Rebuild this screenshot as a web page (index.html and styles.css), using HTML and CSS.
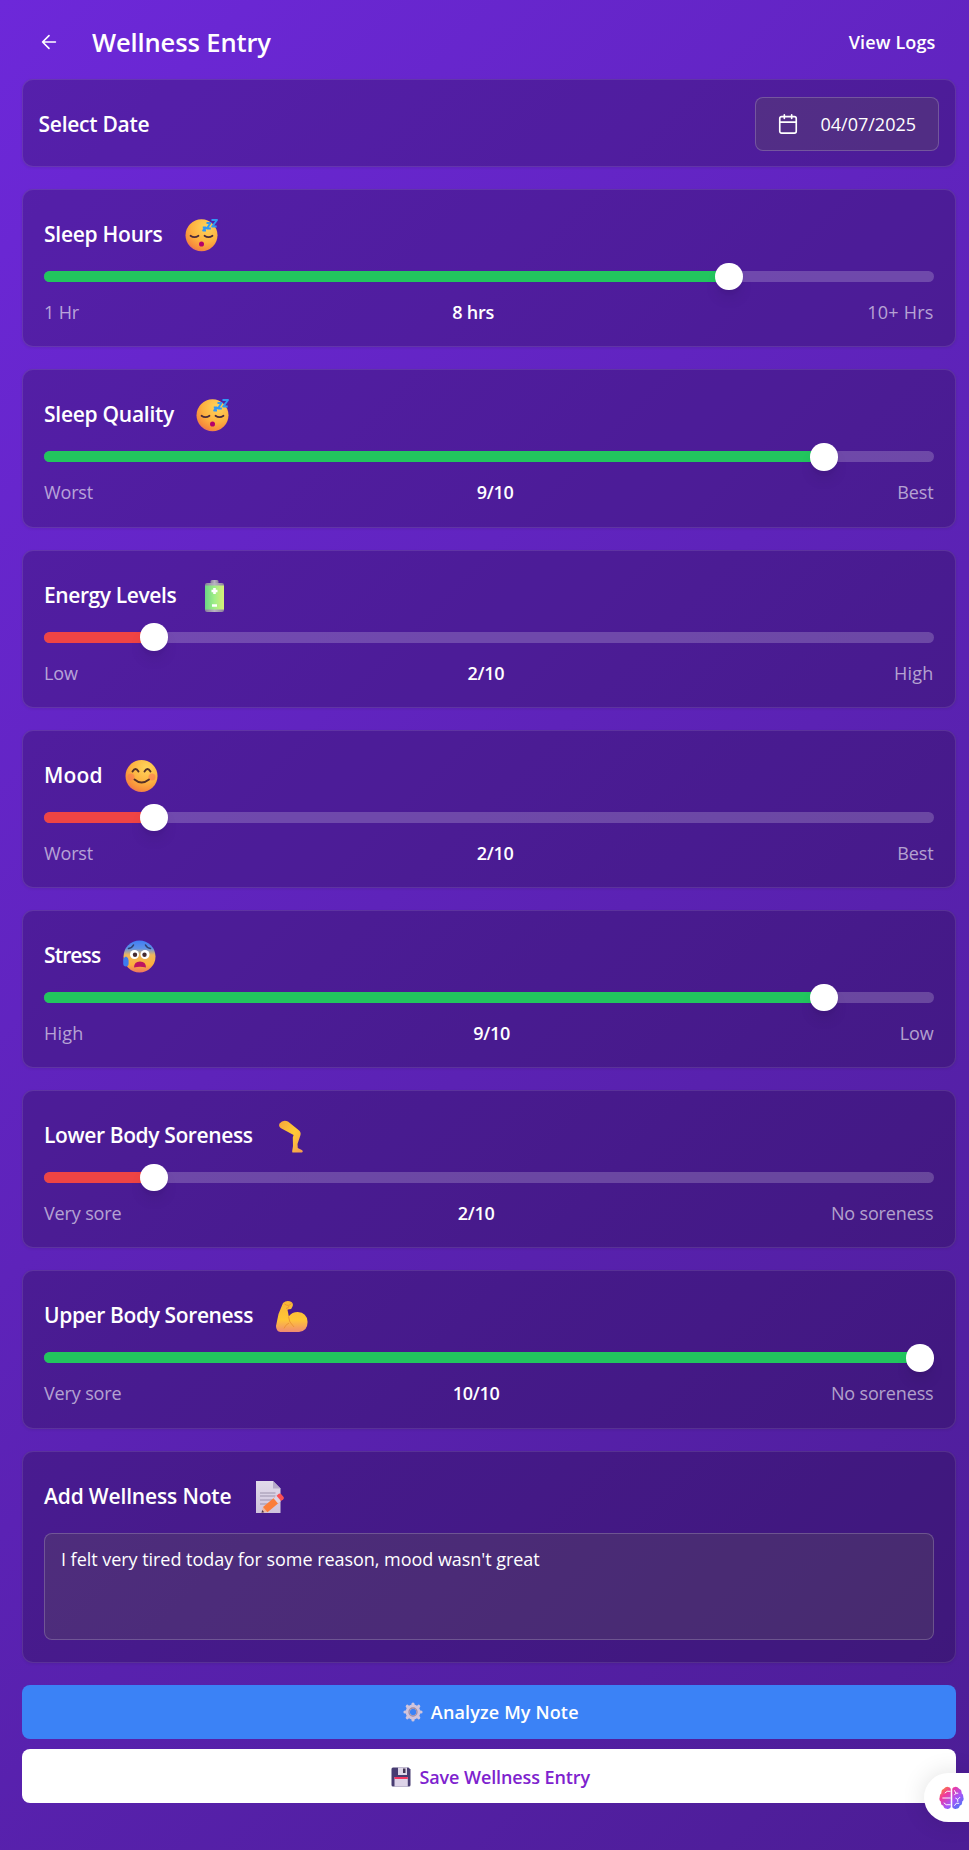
FILE: index.html
```html
<!DOCTYPE html>
<html lang="en">
<head>
<meta charset="utf-8">
<title>Wellness Entry</title>
<link rel="stylesheet" href="styles.css">
</head>
<body>
<svg class="defs" width="0" height="0" aria-hidden="true">
  <defs>
    <radialGradient id="face" cx=".65" cy=".25" r=".85"><stop offset="0" stop-color="#ffd45a"/><stop offset=".55" stop-color="#fdb140"/><stop offset=".85" stop-color="#f68a3c"/><stop offset="1" stop-color="#e0607a"/></radialGradient>
    <linearGradient id="cold" x1="0" y1="0" x2="0" y2="1"><stop offset="0" stop-color="#3f7df5"/><stop offset=".25" stop-color="#5f92e6"/><stop offset=".45" stop-color="#efb65c"/><stop offset=".75" stop-color="#fdb03c"/><stop offset="1" stop-color="#ee7460"/></linearGradient>
    <linearGradient id="skin" x1="0" y1="0" x2="1" y2="1"><stop offset="0" stop-color="#f7a43c"/><stop offset=".5" stop-color="#ffcb35"/><stop offset="1" stop-color="#f59a50"/></linearGradient>
    <linearGradient id="arm" x1="0" y1="0" x2="0" y2="1"><stop offset="0" stop-color="#f9b638"/><stop offset=".6" stop-color="#ffc636"/><stop offset="1" stop-color="#f08b72"/></linearGradient>
    <linearGradient id="cell"><stop offset="0" stop-color="#6cd486"/><stop offset=".5" stop-color="#a0ee86"/><stop offset="1" stop-color="#d8ee78"/></linearGradient>
    <linearGradient id="cap"><stop offset="0" stop-color="#88809a"/><stop offset=".5" stop-color="#b9b3c2"/><stop offset="1" stop-color="#8d8499"/></linearGradient>
    <linearGradient id="paper" x1="0" y1="0" x2="0" y2="1"><stop offset="0" stop-color="#e2dbea"/><stop offset="1" stop-color="#cfc4dc"/></linearGradient>
    <linearGradient id="brain" x1="0" y1="0" x2="1" y2="1"><stop offset="0" stop-color="#ff9e1b"/><stop offset=".3" stop-color="#f0389b"/><stop offset=".6" stop-color="#a855f7"/><stop offset="1" stop-color="#2f7cf6"/></linearGradient>
    <symbol id="sleepy" viewBox="0 0 34 34">
      <circle cx="16.500" cy="17.300" r="16" fill="url(#face)"/>
      <path d="M5.500 17.700q4 3 8 0M19.500 17.700q4 3 8 0" fill="none" stroke="#4a2b3a" stroke-width="1.700" stroke-linecap="round"/>
      <ellipse cx="16.500" cy="26" rx="2.500" ry="2.600" fill="#b5006b"/>
      <path d="M26.500 2h5.500l-4.800 6.500h4.500M21.500 5h4l-3.500 5.500h3.800M17.800 9.500h3l-2.600 3h2.800" fill="none" stroke="#3097f5" stroke-width="2" stroke-linejoin="round"/>
    </symbol>
  </defs>
</svg>
<main class="page">
  <header class="header">
    <div class="heading">
      <svg class="back" viewBox="0 0 24 24"><path d="M12 19l-7-7 7-7M19 12H5"/></svg>
      <h1>Wellness Entry</h1>
    </div>
    <a class="logs">View Logs</a>
  </header>

  <section class="card date-card">
    <h2 class="title">Select Date</h2>
    <div class="date">
      <svg class="calendar" viewBox="0 0 24 24"><rect x="3" y="4" width="18" height="18" rx="2"/><path d="M16 2v4M8 2v4M3 10h18"/></svg>
      <span>04/07/2025</span>
    </div>
  </section>

  <section class="card metric">
    <div class="title-row"><h2 class="title">Sleep Hours</h2><svg class="emoji"><use href="#sleepy"/></svg></div>
    <div class="track"><div class="fill good" style="width:684.9px"></div></div>
    <div class="labels"><span>1 Hr</span><b>8 hrs</b><span class="loose">10+ Hrs</span></div>
  </section>

  <section class="card metric">
    <div class="title-row"><h2 class="title">Sleep Quality</h2><svg class="emoji"><use href="#sleepy"/></svg></div>
    <div class="track"><div class="fill good" style="width:780px"></div></div>
    <div class="labels"><span>Worst</span><b>9/10</b><span>Best</span></div>
  </section>

  <section class="card metric">
    <div class="title-row"><h2 class="title tight">Energy Levels</h2>
      <svg class="emoji" viewBox="0 0 34 34"><rect x="12.500" y="1" width="8" height="6" rx="1.500" fill="url(#cap)"/><rect x="7" y="4" width="19" height="29" rx="2" fill="url(#cap)"/><rect x="7" y="6.500" width="19" height="24" fill="url(#cell)"/><path d="M16.500 9v6M13.500 12h6M14 26.500h5" stroke="#fff" stroke-width="2.600"/></svg></div>
    <div class="track"><div class="fill bad" style="width:110px"></div></div>
    <div class="labels"><span>Low</span><b>2/10</b><span class="loose">High</span></div>
  </section>

  <section class="card metric">
    <div class="title-row"><h2 class="title wide">Mood</h2>
      <svg class="emoji" viewBox="0 0 34 34"><circle cx="16.500" cy="17" r="16" fill="url(#face)"/><circle cx="6" cy="18" r="3.500" fill="#fa7353" opacity=".55"/><circle cx="27" cy="18" r="3.500" fill="#fa7353" opacity=".55"/><path d="M7.500 12.500q3-5 6 0M19.500 12.500q3-5 6 0M9.500 20.500q7 6 14.500 0" fill="none" stroke="#543027" stroke-width="1.900" stroke-linecap="round"/></svg></div>
    <div class="track"><div class="fill bad" style="width:110px"></div></div>
    <div class="labels"><span>Worst</span><b>2/10</b><span>Best</span></div>
  </section>

  <section class="card metric">
    <div class="title-row"><h2 class="title narrow">Stress</h2>
      <svg class="emoji" viewBox="0 0 34 34"><circle cx="17.500" cy="17.500" r="16" fill="url(#cold)"/><path d="M6.500 9.500q3.500-.5 5-3.500M23.500 6q1.500 3 5 3.500" fill="none" stroke="#314070" stroke-width="1.600" stroke-linecap="round"/><circle cx="12.500" cy="15.500" r="4.500" fill="#fff"/><circle cx="23" cy="15.500" r="4.500" fill="#fff"/><circle cx="13" cy="15.700" r="2.200" fill="#452b32"/><circle cx="22.500" cy="15.700" r="2.200" fill="#452b32"/><path d="M12 28.500q0-6 6-6t6 6q-6-1.500-12 0" fill="#bd1461"/><path d="M4 17.500q-2.800 1-2.800 4v3q0 3 2.700 3t2.700-3v-3q0-3-2.600-4" fill="#3d7bf0"/></svg></div>
    <div class="track"><div class="fill good" style="width:780px"></div></div>
    <div class="labels"><span class="loose">High</span><b>9/10</b><span>Low</span></div>
  </section>

  <section class="card metric">
    <div class="title-row"><h2 class="title long">Lower Body Soreness</h2>
      <svg class="emoji" viewBox="0 0 34 34"><path d="M4.500 4.500Q8 .3 13 2.500L23.500 11q2.700 2 2 5L22.500 25l.3 4 4.500 2.200q1.200 1.800-.3 2.300h-9.300q-.7 0-.5-1.500l.8-5-.2-8.500.8-2.500L6.500 9.500q-3.500-1.800-2-5" fill="url(#skin)"/></svg></div>
    <div class="track"><div class="fill bad" style="width:110px"></div></div>
    <div class="labels"><span>Very sore</span><b>2/10</b><span>No soreness</span></div>
  </section>

  <section class="card metric">
    <div class="title-row"><h2 class="title long">Upper Body Soreness</h2>
      <svg class="emoji low" viewBox="0 0 34 34"><path d="M8 3q4-3.500 8.500-1 2.200 1.800 1 4.500-.8 3-3.500 2.800l-1.500.5 1.300 6.500q3.200-4.300 9-4.300 9 .5 9.700 9.500.5 9.500-8.500 10.500H5.500Q1 31.500 1 26L3.500 14z" fill="url(#arm)"/><path d="M13.500 16.500q0 5.500 5.500 10.500M14 23q-4 2-5 5.500M9.500 4q4 3 7-.5M11 8.500q3-.5 3-2.500" fill="none" stroke="#ed9536" stroke-width="1"/></svg></div>
    <div class="track"><div class="fill good" style="width:876.200px"></div></div>
    <div class="labels"><span>Very sore</span><b>10/10</b><span>No soreness</span></div>
  </section>

  <section class="card note-card">
    <div class="title-row"><h2 class="title note-title">Add Wellness Note</h2>
      <svg class="emoji" viewBox="0 0 34 34"><path d="M3 1h17l7.500 7.500V33H3z" fill="url(#paper)"/><path d="M20 1v7.500h7.500z" fill="#b8abc9"/><path d="M7 13h15.500M7 16h15.500M7 20h13M7 24h8" stroke="#9c91ac" stroke-width="1.200"/><path d="M8.500 32.700L10 27l4.500 5z" fill="#efb49a"/><path d="M8.500 32.700L9.200 30l2 2.200z" fill="#49354c"/><path d="M10 27l12-10 4.500 5.300-12 9.900z" fill="#fb7e3a"/><path d="M20.500 18.200l3-2.500 4.500 5.300-3 2.500z" fill="#ded3e4"/><path d="M23.500 15.700l2.300-1.900q1.200-.7 2.200.3l2.600 3q.8 1.200-.3 2.200L28 21z" fill="#fb5154"/></svg></div>
    <div class="note">I felt very tired today for some reason, mood wasn't great</div>
  </section>

  <div class="actions">
    <div class="button analyze">
      <svg class="small" viewBox="0 0 20 20"><g fill="none" stroke="#d0c4dc"><circle cx="10" cy="10" r="5.300" stroke-width="4.200"/><path d="M10 2v3M10 15v3M2 10h3M15 10h3M4.300 4.300l2 2M13.700 13.700l2 2M4.300 15.700l2-2M13.700 6.300l2-2" stroke-width="3.200" stroke-linecap="round"/></g><circle cx="10" cy="10" r="4" fill="none" stroke="#9a8ba6" stroke-width="1.300"/></svg>
      <span>Analyze My Note</span>
    </div>
    <div class="button save">
      <svg class="small" viewBox="0 0 20 20"><path d="M2 .5h15.500l2 2V18q0 1.500-1.500 1.500H2Q.5 19.500.5 18V2Q.5.5 2 .5" fill="#483c72"/><path d="M7 .5h9V8H7z" fill="#ded7e8"/><path d="M12 1.500h2.500V6H12z" fill="#423454"/><path d="M3.500 10h13.300v9.500H3.500z" fill="#ddd3e8"/><path d="M3.500 10h13.300v2H3.500z" fill="#f43761"/></svg>
      <span>Save Wellness Entry</span>
    </div>
  </div>
</main>
<div class="assistant">
  <svg viewBox="0 0 26 24"><path d="M12.200 2.500v19Q10.500 24 8 23.200 5 23 4.500 20 1.500 19 2 16-.5 14 .8 11 .5 8 2.500 7 2 3.500 5 2.500 7 0 9.500.5q2 .2 2.700 2M13.800 2.500v19q1.700 2.500 4.200 1.700 3-.2 3.500-3.200 3-1 2.500-4 2.500-2 1.200-5 .3-3-1.700-4 .5-3.500-2.500-4.500-2-2.500-4.500-2-2 .2-2.700 2" fill="url(#brain)"/><path d="M12 5H8.500L6 7M3.500 12H12M5 17l2.500 2H12M16 4l1.500 3H20M17.500 7L16 9M22 11l-2.500 2.500V16M19.500 13.500L17 12M16 20l2-2.500h3" fill="none" stroke="#fff" stroke-width="1"/></svg>
</div>
</body>
</html>
```
FILE: styles.css
```css
* { box-sizing: border-box; }
body {
  margin: 0;
  height: 1850px;
  overflow: hidden;
  color: #fff;
  font-family: "Open Sans", "Noto Sans", sans-serif;
  font-size: 18px;
  background: linear-gradient(135deg, #6d28d9, #4c1d95);
}
.defs { position: absolute; }
.page { display: flex; flex-direction: column; gap: 22px; width: 955.5px; padding-left: 22px; }
.header { display: flex; justify-content: space-between; align-items: center; height: 79px; padding: 4px 20px 0 16px; margin-bottom: -22px; }
.heading { display: flex; align-items: center; gap: 32px; }
.back { width: 22px; height: 22px; fill: none; stroke: #fff; stroke-width: 1.8; stroke-linecap: round; stroke-linejoin: round; }
h1, h2 { margin: 0; font-weight: 600; white-space: nowrap; }
h1 { font-size: 25.5px; letter-spacing: -.12px; }
.logs { font-weight: 600; font-size: 18px; letter-spacing: .15px; }
.card {
  border: 1px solid rgba(255,255,255,.1);
  border-radius: 11px;
  background: rgba(0,0,0,.2);
  box-shadow: 0 1px 3px rgba(0,0,0,.08);
}
.title { font-size: 21px; line-height: 30px; letter-spacing: -.26px; }
.tight { letter-spacing: -.4px; }
.long { letter-spacing: -.38px; }
.narrow { letter-spacing: -.85px; }
.wide { letter-spacing: .2px; }
.note-title { letter-spacing: -.16px; }
.date-card { display: flex; align-items: center; justify-content: space-between; height: 88.1px; padding: 1px 16px 0 15.5px; }
.date {
  display: flex; align-items: center; gap: 22px;
  width: 184px; height: 54px; padding: 0 20px 0 21px;
  border: 1px solid rgba(255,255,255,.2); border-radius: 8px;
  background: rgba(94,90,84,.29);
  font-size: 18px; white-space: nowrap;
}
.calendar { width: 22px; height: 22px; flex: none; fill: none; stroke: #fff; stroke-width: 1.8; stroke-linecap: round; stroke-linejoin: round; }
.metric, .note-card { padding: 21px 21px 0; }
.metric { height: 158.22px; }
.title-row { display: flex; align-items: center; gap: 22px; height: 48px; }
.title-row .title { margin-top: -2px; }
.emoji { width: 34px; height: 34px; flex: none; }
.low { margin-top: 2px; }
.track { display: flex; height: 11px; margin-top: 12px; border-radius: 6px; background: rgba(255,255,255,.2); }
.fill { position: relative; border-radius: 6px 0 0 6px; }
.good { background: #22c55e; }
.bad { background: #ef4444; }
.fill::after {
  content: ""; position: absolute; right: -13.75px; top: -8.25px;
  width: 27.5px; height: 27.5px; border-radius: 50%; background: #fff;
  box-shadow: 0 10px 15px -3px rgba(0,0,0,.1), 0 4px 6px -4px rgba(0,0,0,.1);
}
.labels { display: flex; justify-content: space-between; margin-top: 17px; line-height: 26px; font-size: 18px; letter-spacing: -.15px; color: rgba(255,255,255,.6); }
.labels b { color: #fff; font-weight: 600; letter-spacing: -.25px; }
.labels .loose { letter-spacing: .2px; }
.note-card { height: 212.5px; }
.note {
  height: 107.5px; margin-top: 12px; padding: 12px 16px;
  border: 1px solid rgba(255,255,255,.2); border-radius: 8px;
  background: rgba(94,90,84,.29); line-height: 27px; font-size: 18px; letter-spacing: -.04px;
}
.actions { display: flex; flex-direction: column; gap: 10px; }
.button { display: flex; align-items: center; justify-content: center; gap: 8px; height: 54px; border-radius: 8px; font-size: 18px; font-weight: 600; letter-spacing: .15px; }
.small { width: 20px; height: 20px; }
.analyze { background: #3b82f6; padding-left: 4px; }
.save { background: #fff; color: #7e22ce; letter-spacing: -.1px; padding: 2px 0 0 4px; }
.assistant {
  position: absolute; left: 924px; top: 1772.5px; width: 45px; height: 49px; padding: 13px 0 0 15px;
  border-radius: 25px 0 0 25px; background: #fff; box-shadow: 0 0 24px rgba(0,0,0,.12);
}
.assistant svg { display: block; width: 25px; height: 24px; }
```
